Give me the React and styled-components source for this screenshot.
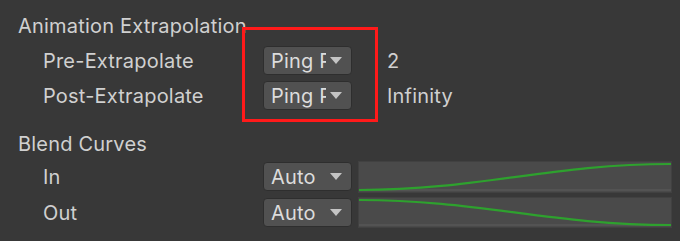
import React from "react";
import styled, { createGlobalStyle } from "styled-components";

const Global = createGlobalStyle`
  html, body { margin: 0; padding: 0; background: #383838; }
  body { font-family: Inter, "Noto Sans", sans-serif; }
`;

const Panel = styled.div`
  position: relative;
  width: 680px;
  height: 241px;
  box-sizing: border-box;
  padding: 14px 8px 0 18px;
  display: flex;
  flex-direction: column;
  color: #d0d0d0;
  font-size: 20px;
  letter-spacing: 0.2px;
  overflow: hidden;
`;

const Section = styled.div`
  display: flex;
  flex-direction: column;
  gap: ${(p) => p.$gap}px;
`;

const Title = styled.div`
  height: 24px;
  line-height: 24px;
  margin-top: ${(p) => p.$before || 0}px;
  margin-bottom: ${(p) => p.$after}px;
  white-space: nowrap;
`;

const Row = styled.div`
  height: 29px;
  display: flex;
  align-items: center;
`;

const Label = styled.div`
  width: 220px;
  padding-left: 25px;
  line-height: 24px;
  white-space: nowrap;
`;

const Dropdown = styled.div`
  width: 89px;
  height: 29px;
  box-sizing: border-box;
  background: #515151;
  border: 1px solid #2e2e2e;
  border-radius: 4px;
  display: flex;
  align-items: center;
  padding: 0 9px 0 7px;
  flex-shrink: 0;
`;

const DropText = styled.span`
  width: ${(p) => p.$w}px;
  overflow: hidden;
  white-space: nowrap;
  line-height: 24px;
  color: #dcdcdc;
`;

const Arrow = styled.span`
  margin-left: auto;
  width: 0;
  height: 0;
  border-left: 6px solid transparent;
  border-right: 6px solid transparent;
  border-top: 7px solid #c4c4c4;
`;

const Value = styled.div`
  margin-left: 35px;
  line-height: 24px;
`;

const CurveField = styled.div`
  margin-left: 6px;
  flex: 1;
  height: ${(p) => p.$h}px;
  background: #4a4a4a;
  border: 1px solid #414141;
  box-sizing: border-box;
  display: flex;
`;

const Highlight = styled.div`
  position: absolute;
  left: 242px;
  top: 27px;
  width: 136px;
  height: 95px;
  box-sizing: border-box;
  border: 3px solid #ff1a1a;
  pointer-events: none;
`;

const Curve = ({ rising, h }) => {
  const w = 311;
  const top = 2;
  const bot = h - 4;
  const d = rising
    ? `M0,${bot} C120,${bot} 190,${top} ${w},${top}`
    : `M0,${top} C120,${top} 190,${bot} ${w},${bot}`;
  return (
    <svg width="100%" height="100%" viewBox={`0 0 ${w} ${h - 2}`} preserveAspectRatio="none">
      <line x1="0" y1={h - 4} x2={w} y2={h - 4} stroke="#5c5c5c" strokeWidth="1" />
      <path d={d} fill="none" stroke="#2ea12e" strokeWidth="2.2" />
    </svg>
  );
};

export default function App() {
  return (
    <>
      <Global />
      <Panel>
        <Title $after={8}>Animation Extrapolation</Title>
        <Section $gap={6}>
          <Row>
            <Label>Pre-Extrapolate</Label>
            <Dropdown>
              <DropText $w={55}>Ping Pong</DropText>
              <Arrow />
            </Dropdown>
            <Value>2</Value>
          </Row>
          <Row>
            <Label>Post-Extrapolate</Label>
            <Dropdown>
              <DropText $w={55}>Ping Pong</DropText>
              <Arrow />
            </Dropdown>
            <Value>Infinity</Value>
          </Row>
        </Section>
        <Title $before={22} $after={6}>Blend Curves</Title>
        <Section $gap={7}>
          <Row>
            <Label>In</Label>
            <Dropdown>
              <DropText $w={55}>Auto</DropText>
              <Arrow />
            </Dropdown>
            <CurveField $h={32}>
              <Curve rising h={32} />
            </CurveField>
          </Row>
          <Row>
            <Label>Out</Label>
            <Dropdown>
              <DropText $w={55}>Auto</DropText>
              <Arrow />
            </Dropdown>
            <CurveField $h={31}>
              <Curve h={31} />
            </CurveField>
          </Row>
        </Section>
        <Highlight />
      </Panel>
    </>
  );
}
